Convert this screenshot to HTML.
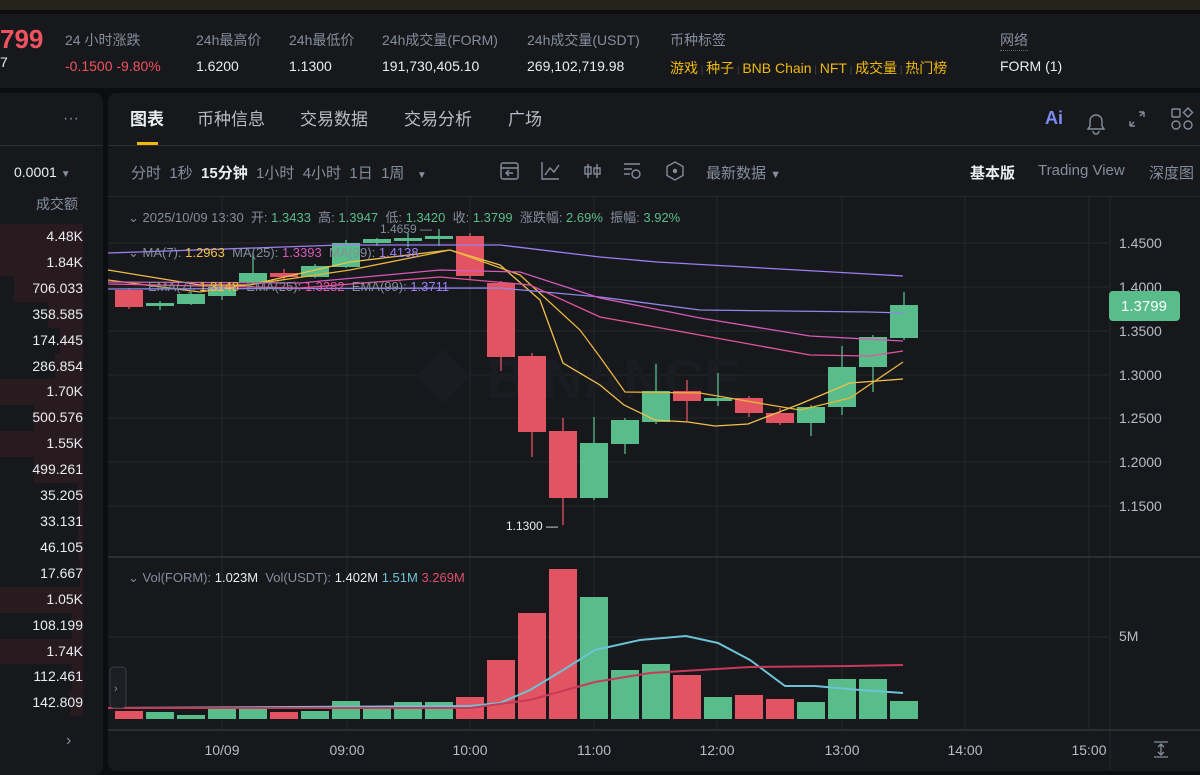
<!DOCTYPE html>
<html><head><meta charset="utf-8"><style>
*{margin:0;padding:0;box-sizing:border-box}
body{width:1200px;height:775px;overflow:hidden;background:#0c0d10;font-family:"Liberation Sans","Noto Sans CJK SC",sans-serif;color:#eaecef;position:relative}
.a{position:absolute;white-space:nowrap}
.lb{font-size:14px;color:#848e9c}
.v{font-size:14px;color:#eaecef}
.y{color:#f0b90b}
</style></head><body>
<div class="a" style="left:0;top:0;width:1200px;height:10px;background:#25241a"></div>
<div class="a" style="left:0;top:14px;width:1200px;height:74px;background:#17181c"></div>
<div class="a" style="left:0;top:24px;font-size:26px;font-weight:bold;color:#f0525f">799</div>
<div class="a" style="left:0;top:54px;font-size:14px">7</div>
<div class="a lb" style="left:65px;top:30px">24 小时涨跌</div>
<div class="a v" style="left:65px;top:58px;color:#f0525f">-0.1500 -9.80%</div>
<div class="a lb" style="left:196px;top:30px">24h最高价</div>
<div class="a v" style="left:196px;top:58px">1.6200</div>
<div class="a lb" style="left:289px;top:30px">24h最低价</div>
<div class="a v" style="left:289px;top:58px">1.1300</div>
<div class="a lb" style="left:382px;top:30px">24h成交量(FORM)</div>
<div class="a v" style="left:382px;top:58px">191,730,405.10</div>
<div class="a lb" style="left:527px;top:30px">24h成交量(USDT)</div>
<div class="a v" style="left:527px;top:58px">269,102,719.98</div>
<div class="a lb" style="left:670px;top:30px">币种标签</div>
<div class="a v y" style="left:670px;top:58px">游戏<span style="color:#444;font-size:10px"> | </span>种子<span style="color:#444;font-size:10px"> | </span>BNB Chain<span style="color:#444;font-size:10px"> | </span>NFT<span style="color:#444;font-size:10px"> | </span>成交量<span style="color:#444;font-size:10px"> | </span>热门榜</div>
<div class="a lb" style="left:1000px;top:30px;border-bottom:1px dotted #666">网络</div>
<div class="a v" style="left:1000px;top:58px">FORM (1)</div>

<div class="a" style="left:-10px;top:93px;width:113px;height:682px;background:#17181c;border-radius:8px"></div>
<div class="a" style="left:63px;top:110px;color:#848e9c;font-size:16px">···</div>
<div class="a" style="left:0;top:145px;width:103px;height:1px;background:#2b2e35"></div>
<div class="a" style="left:14px;top:164px;font-size:14px">0.0001 <span style="color:#848e9c;font-size:10px">▼</span></div>
<div class="a lb" style="left:36px;top:194px">成交额</div>
<div class="a" style="left:0;top:224px;width:83px;font-size:14px;line-height:25.9px;text-align:right">
<div style="background:#271b20">4.48K</div>
<div style="background:#271b20">1.84K</div>
<div style="background:linear-gradient(90deg,transparent 14px,#271b20 14px)">706.033</div>
<div style="background:linear-gradient(90deg,transparent 48px,#271b20 48px)">358.585</div>
<div style="background:linear-gradient(90deg,transparent 60px,#271b20 60px)">174.445</div>
<div style="background:linear-gradient(90deg,transparent 55px,#271b20 55px)">286.854</div>
<div style="background:#271b20">1.70K</div>
<div style="background:linear-gradient(90deg,transparent 34px,#271b20 34px)">500.576</div>
<div style="background:#271b20">1.55K</div>
<div style="background:linear-gradient(90deg,transparent 34px,#271b20 34px)">499.261</div>
<div style="background:linear-gradient(90deg,transparent 78px,#271b20 78px)">35.205</div>
<div style="background:linear-gradient(90deg,transparent 78px,#271b20 78px)">33.131</div>
<div style="background:linear-gradient(90deg,transparent 78px,#271b20 78px)">46.105</div>
<div style="background:linear-gradient(90deg,transparent 80px,#271b20 80px)">17.667</div>
<div style="background:#271b20">1.05K</div>
<div style="background:linear-gradient(90deg,transparent 72px,#271b20 72px)">108.199</div>
<div style="background:#271b20">1.74K</div>
<div style="background:linear-gradient(90deg,transparent 72px,#271b20 72px)">112.461</div>
<div style="background:linear-gradient(90deg,transparent 70px,#271b20 70px)">142.809</div>
</div>
<div class="a" style="left:66px;top:732px;color:#848e9c;font-size:16px">›</div>

<div class="a" style="left:108px;top:93px;width:1100px;height:678px;background:#17181c;border-radius:8px"></div>
<div class="a" style="left:130px;top:105px;font-size:17px;font-weight:bold">图表</div>
<div class="a" style="left:137px;top:142px;width:21px;height:3px;background:#f0b90b"></div>
<div class="a" style="left:197px;top:105px;font-size:17px;color:#b7bdc6">币种信息</div>
<div class="a" style="left:300px;top:105px;font-size:17px;color:#b7bdc6">交易数据</div>
<div class="a" style="left:404px;top:105px;font-size:17px;color:#b7bdc6">交易分析</div>
<div class="a" style="left:508px;top:105px;font-size:17px;color:#b7bdc6">广场</div>
<div class="a" style="left:1045px;top:108px;font-size:18px;font-weight:bold;color:#7a8cf5">Ai</div>
<div class="a" style="left:108px;top:145px;width:1092px;height:1px;background:#2b2e35"></div>
<div class="a" style="left:131px;top:162px;font-size:15px;color:#848e9c">分时 &nbsp;1秒 &nbsp;<b style="color:#eaecef">15分钟</b> &nbsp;1小时 &nbsp;4小时 &nbsp;1日 &nbsp;1周 &nbsp; <span style="font-size:10px">▼</span></div>
<div class="a" style="left:706px;top:162px;font-size:15px;color:#848e9c">最新数据 <span style="font-size:11px">▼</span></div>
<div class="a" style="left:970px;top:162px;font-size:15px;font-weight:bold">基本版</div>
<div class="a" style="left:1038px;top:162px;font-size:15px;color:#848e9c">Trading View</div>
<div class="a" style="left:1149px;top:162px;font-size:15px;color:#848e9c">深度图</div>
<div class="a" style="left:108px;top:196px;width:1092px;height:1px;background:#25282e"></div>

<svg class="a" style="left:0;top:0" width="1200" height="775" font-family="Liberation Sans, Noto Sans CJK SC, sans-serif">
<g stroke="#848e9c" fill="none" stroke-width="1.4">
<rect x="501" y="163" width="17" height="16" rx="2"/><line x1="501" y1="168" x2="518" y2="168"/><path d="M513 173h-7m3-3l-3 3 3 3"/>
<path d="M542 162v17h17M545 175l5-7 4 4 5-7"/>
<path d="M588 164v14M597 164v14"/><rect x="585" y="167" width="6" height="7"/><rect x="594" y="168" width="6" height="6"/>
<path d="M624 164h16M624 169h8M624 174h6"/><circle cx="636" cy="174" r="4"/>
<path d="M675 162l8 4.5v9l-8 4.5-8-4.5v-9z"/><circle cx="675" cy="171" r="1.5" fill="#848e9c"/>
<path d="M1090 121a6 6 0 0 1 12 0v5l2 3h-16l2-3z M1093 131a3 3 0 0 0 6 0"/>
<path d="M1130 126l4-4M1144 112l-4 4M1130 126v-5M1130 126h5M1144 112v5M1144 112h-5"/>
<rect x="1172" y="109" width="8" height="8" rx="1"/><path d="M1188 108l4.5 4.5-4.5 4.5-4.5-4.5z"/><circle cx="1176" cy="125" r="4"/><circle cx="1188" cy="125" r="4"/>
</g>
<g stroke="#25272d" stroke-width="1">
<line x1="108" y1="243" x2="1110" y2="243"/><line x1="108" y1="287" x2="1110" y2="287"/><line x1="108" y1="331" x2="1110" y2="331"/><line x1="108" y1="375" x2="1110" y2="375"/><line x1="108" y1="418" x2="1110" y2="418"/><line x1="108" y1="462" x2="1110" y2="462"/><line x1="108" y1="506" x2="1110" y2="506"/><line x1="108" y1="637" x2="1110" y2="637"/>
<line x1="222" y1="197" x2="222" y2="730"/><line x1="347" y1="197" x2="347" y2="730"/><line x1="470" y1="197" x2="470" y2="730"/><line x1="594" y1="197" x2="594" y2="730"/><line x1="717" y1="197" x2="717" y2="730"/><line x1="842" y1="197" x2="842" y2="730"/><line x1="965" y1="197" x2="965" y2="730"/><line x1="1089" y1="197" x2="1089" y2="730"/>
<line x1="1110" y1="197" x2="1110" y2="770"/>
</g>
<line x1="108" y1="557" x2="1200" y2="557" stroke="#33363d" stroke-width="1.5"/>
<line x1="108" y1="730" x2="1200" y2="730" stroke="#33363d" stroke-width="1.5"/>
<text x="415" y="398" font-size="56" font-weight="bold" fill="#1b1c21">◆ BINANCE</text>
<g id="c"></g>
<g stroke-width="1.3">
<path fill="none" stroke="#f0c04a" d="M108 270L200 285L250 285L350 262L450 250L500 265L540 300L563 363L600 385L624 405L655 420L688 422L715 426L748 424L800 404L850 383L903 379"/>
<path fill="none" stroke="#e8b63a" d="M108 280L200 292L350 270L450 250L520 275L580 330L600 357L625 392L700 393L770 405L800 410L850 398L903 362"/>
<path fill="none" stroke="#9b7ff5" d="M108 253L340 245L500 245L600 257L657 262L903 276"/>
<path fill="none" stroke="#8f86e8" d="M108 289L500 288L600 297L700 310L870 312L903 313"/>
<path fill="none" stroke="#d45bb8" d="M108 282L300 283L440 270L520 272L600 298L700 318L810 336L903 341"/>
<path fill="none" stroke="#e055a0" d="M108 284L300 288L440 277L530 285L600 317L650 326L810 355L870 356L903 351"/>
</g>
<g font-size="13" fill="#848e9c">
<text x="128" y="222">⌄ 2025/10/09 13:30 &#160;开: <tspan fill="#58bd8a">1.3433</tspan> &#160;高: <tspan fill="#58bd8a">1.3947</tspan> &#160;低: <tspan fill="#58bd8a">1.3420</tspan> &#160;收: <tspan fill="#58bd8a">1.3799</tspan> &#160;涨跌幅: <tspan fill="#58bd8a">2.69%</tspan> &#160;振幅: <tspan fill="#58bd8a">3.92%</tspan></text>
<text x="128" y="257">⌄ MA(7): <tspan fill="#f0c04a">1.2963</tspan> &#160;MA(25): <tspan fill="#d45bb8">1.3393</tspan> &#160;MA(99): <tspan fill="#9b7ff5">1.4138</tspan></text>
<text x="148" y="291">EMA(7): <tspan fill="#f0c04a">1.3148</tspan> &#160;EMA(25): <tspan fill="#e055a0">1.3282</tspan> &#160;EMA(99): <tspan fill="#9b7ff5">1.3711</tspan></text>
<text x="380" y="233" font-size="12">1.4659 —</text>
<text x="506" y="530" font-size="12" fill="#eaecef">1.1300 —</text>
<text x="128" y="582">⌄ Vol(FORM): <tspan fill="#eaecef">1.023M</tspan> &#160;Vol(USDT): <tspan fill="#eaecef">1.402M</tspan> <tspan fill="#6cc3d5">1.51M</tspan> <tspan fill="#d9506a">3.269M</tspan></text>
<g font-size="14" fill="#b7bdc6"><text x="1119" y="248">1.4500</text><text x="1119" y="292">1.4000</text><text x="1119" y="336">1.3500</text><text x="1119" y="380">1.3000</text><text x="1119" y="423">1.2500</text><text x="1119" y="467">1.2000</text><text x="1119" y="511">1.1500</text><text x="1119" y="641">5M</text>
<g text-anchor="middle"><text x="222" y="755">10/09</text><text x="347" y="755">09:00</text><text x="470" y="755">10:00</text><text x="594" y="755">11:00</text><text x="717" y="755">12:00</text><text x="842" y="755">13:00</text><text x="965" y="755">14:00</text><text x="1089" y="755">15:00</text></g></g>
</g>
<rect x="1109" y="291" width="71" height="30" rx="4" fill="#58bd8a"/>
<text x="1144" y="311" text-anchor="middle" font-size="15" fill="#fff">1.3799</text>
<rect x="110" y="667" width="16" height="41" rx="4" fill="#1c1e23" stroke="#3a3d44"/>
<text x="114" y="692" font-size="11" fill="#848e9c">›</text>
<path d="M1154 742h14M1154 757h14M1161 744v11M1158 747l3-3 3 3M1158 752l3 3 3-3" stroke="#848e9c" fill="none" stroke-width="1.3"/>
</svg>
<script>
var C=[["r",290,307,288,309],["g",303,306,301,310],["g",294,304,292,305],["g",287,296,285,300],["g",273,282,253,283],["r",273,277,269,280],["g",266,277,264,278],["g",243,267,240,268],["g",239,243,238,246],["g",238,241,233,247],["g",236,239,229,246],["r",236,276,233,279],["r",283,357,281,371],["r",356,432,353,457],["r",431,498,418,525],["g",443,498,417,500],["g",420,444,418,454],["g",391,422,364,424],["r",391,401,380,421],["g",398,401,373,406],["r",398,413,396,417],["r",413,423,408,425],["g",407,423,405,436],["g",367,407,346,415],["g",337,367,335,392],["g",305,338,292,340]];
var V=[711,712,715,708,707,712,711,701,708,702,702,697,660,613,569,597,670,664,675,697,695,699,702,679,679,701];
var VC="rgggg rgggggrrrrgggrgrrgggg".replace(/ /g,"");
var s="";for(var i=0;i<C.length;i++){var c=C[i],x=129+31*i,col=c[0]=="g"?"#58bd8a":"#e35462";
s+='<line x1="'+x+'" y1="'+c[3]+'" x2="'+x+'" y2="'+c[4]+'" stroke="'+col+'" stroke-width="1.3"/>';
s+='<rect x="'+(x-14)+'" y="'+c[1]+'" width="28" height="'+Math.max(2,c[2]-c[1])+'" fill="'+col+'"/>';
var vc=VC[i]=="g"?"#58bd8a":"#e35462";
s+='<rect x="'+(x-14)+'" y="'+V[i]+'" width="28" height="'+(719-V[i])+'" fill="'+vc+'"/>';}
s+='<path fill="none" stroke="#6cc3d5" stroke-width="2" d="M108 708L470 706L500 703L530 690L560 672L595 650L640 640L686 636L718 643L750 660L785 686L815 686L860 690L903 693"/>';
s+='<path fill="none" stroke="#c8395a" stroke-width="2" d="M108 708L470 708L530 700L595 682L650 673L750 667L850 666L903 665"/>';
document.getElementById("c").innerHTML=s;
</script>
</body></html>
